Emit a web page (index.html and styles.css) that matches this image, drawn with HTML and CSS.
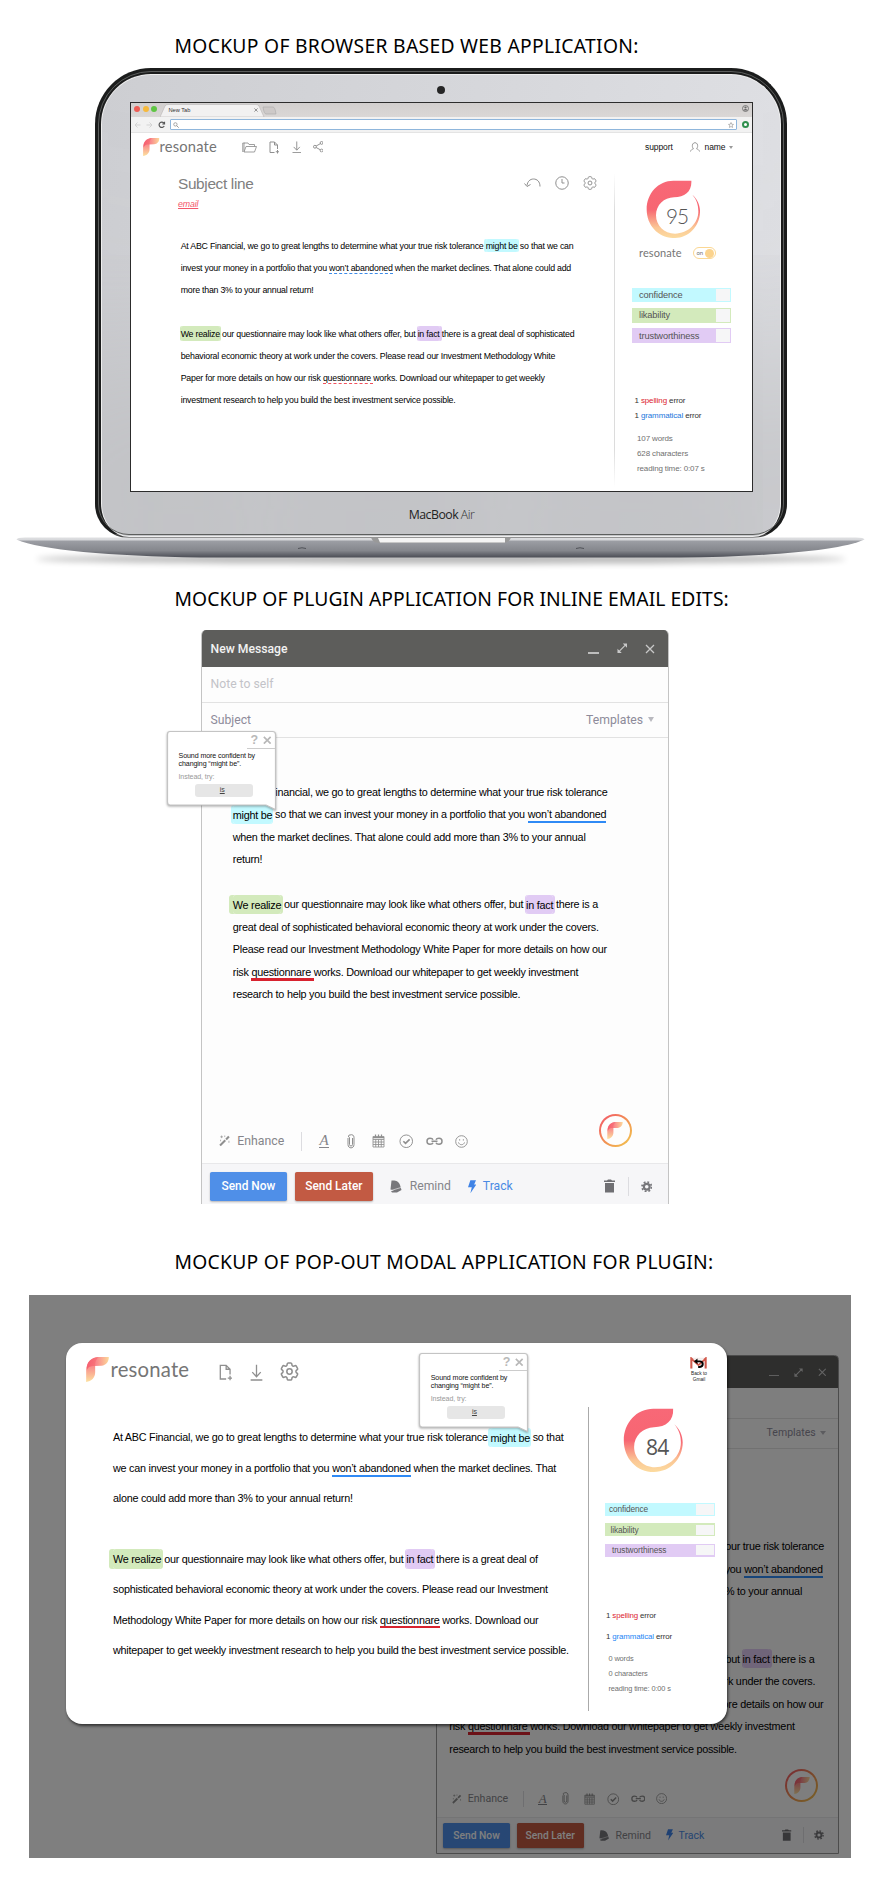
FILE: index.html
```html
<!DOCTYPE html>
<html lang="en">
<head>
<meta charset="utf-8">
<title>Resonate mockups</title>
<link rel="stylesheet" href="styles.css">
</head>
<body>
<svg class="defs" aria-hidden="true">
  <defs>
    <linearGradient id="ringFill" x1="0" y1="0" x2="0" y2="1"><stop offset="0" stop-color="#f86877"/><stop offset=".5" stop-color="#f76672"/><stop offset=".82" stop-color="#fbc795"/><stop offset="1" stop-color="#fcdb9f"/></linearGradient>
    <linearGradient id="leafH" x1="0" y1="0" x2="1" y2="0"><stop offset="0" stop-color="#f5566c"/><stop offset=".45" stop-color="#f87478"/><stop offset="1" stop-color="#fcd288"/></linearGradient>
    <linearGradient id="leafV" x1="0" y1="0" x2="0" y2="1"><stop offset="0" stop-color="#f5566c"/><stop offset=".45" stop-color="#f88279"/><stop offset="1" stop-color="#fcdc8e"/></linearGradient>
    <linearGradient id="metal" x1="0" y1="0" x2="0" y2="1"><stop offset="0" stop-color="#dfe0e2"/><stop offset=".1" stop-color="#d8d9dc"/><stop offset=".2" stop-color="#9b9da3"/><stop offset=".65" stop-color="#85878d"/><stop offset="1" stop-color="#4b4d55"/></linearGradient>
    <filter id="soft" x="-10%" y="-100%" width="120%" height="300%"><feGaussianBlur stdDeviation="3"/></filter>
  </defs>
  <symbol id="mark" viewBox="0 0 68 75">
    <path d="M0 75V40C1 16 14 2 38 0C29 6 27 16 27 26V46C27 62 16 74 0 75Z" fill="url(#leafV)" opacity=".85"/>
    <path d="M68 0H38C14 1 0 15 2 40C6 29 14 27 24 27L46 26C60 25 68 14 68 0Z" fill="url(#leafH)" opacity=".85"/>
  </symbol>
  <symbol id="ring" viewBox="618 478 164 176">
    <path fill="url(#ringFill)" d="M754 480H700C655 480 620 518 620 566C620 615 655 652 702 652C746 652 780 616 780 572C780 552 771 534 757 522C770 537 775 553 775 572C775 608 744 639 705 639C672 639 648 614 648 584C648 553 672 531 702 530C735 530 756 512 754 480Z"/>
  </symbol>
  <symbol id="i-folder" viewBox="0 0 30 22"><path d="M4 20V2h8l2 3h11v4M4 20L8 9h21l-4 11zM1.500 20V2H5"/></symbol>
  <symbol id="i-file" viewBox="0 0 20 26"><path d="M11 23H2V2h9l6 6v8M11 2v6h6M17 18v7M13.500 21.500h7"/></symbol>
  <symbol id="i-down" viewBox="0 0 20 26"><path d="M10 1v18M3.500 12.500l6.500 7 6.500-7M1 24.500h18"/></symbol>
  <symbol id="i-share" viewBox="0 0 22 24"><circle cx="4" cy="12" r="3"/><circle cx="18" cy="4" r="3"/><circle cx="18" cy="20" r="3"/><path d="M6.500 10.500l9-5M6.500 13.500l9 5"/></symbol>
  <symbol id="i-user" viewBox="0 0 22 22"><path d="M1 21c1-4 4-5 6.500-6M21 21c-1-4-4-5-6.500-6M7.500 15C5 12 4.500 8 6 4.500 8 .5 14 .5 16 4.500 17.500 8 17 12 14.500 15"/></symbol>
  <symbol id="i-undo" viewBox="0 0 34 20"><path d="M32 17C32 7 26 2 19 2 12 2 7 7 6 15M1 11l5 6 7-4"/></symbol>
  <symbol id="i-clock" viewBox="0 0 28 28"><circle cx="14" cy="14" r="12.500"/><path d="M14 6v8h5"/></symbol>
  <symbol id="i-gear" viewBox="2 2 20 20"><path d="M9.594 3.940c.09-.542.56-.94 1.110-.94h2.593c.55 0 1.020.398 1.110.94l.213 1.281c.063.374.313.686.645.87.074.04.147.083.22.127.325.196.72.257 1.075.124l1.217-.456a1.125 1.125 0 0 1 1.370.49l1.296 2.247a1.125 1.125 0 0 1-.26 1.431l-1.003.827c-.293.241-.438.613-.43.992a7.723 7.723 0 0 1 0 .255c-.008.378.137.75.43.991l1.004.827c.424.35.534.955.26 1.430l-1.298 2.247a1.125 1.125 0 0 1-1.369.491l-1.217-.456c-.355-.133-.75-.072-1.076.124a6.470 6.470 0 0 1-.22.128c-.331.183-.581.495-.644.869l-.213 1.281c-.09.543-.56.94-1.110.94h-2.594c-.55 0-1.019-.398-1.110-.94l-.213-1.281c-.062-.374-.312-.686-.644-.87a6.520 6.520 0 0 1-.22-.127c-.325-.196-.72-.257-1.076-.124l-1.217.456a1.125 1.125 0 0 1-1.369-.49l-1.297-2.247a1.125 1.125 0 0 1 .26-1.431l1.004-.827c.292-.24.437-.613.43-.991a6.932 6.932 0 0 1 0-.255c.007-.38-.138-.751-.43-.992l-1.004-.827a1.125 1.125 0 0 1-.26-1.430l1.297-2.247a1.125 1.125 0 0 1 1.370-.491l1.216.456c.356.133.751.072 1.076-.124.072-.044.146-.086.22-.128.332-.183.582-.495.644-.869z"/><circle cx="12" cy="12" r="2.800"/></symbol>
  <symbol id="i-wand" viewBox="0 0 22 22"><path d="M2 20L12 10" stroke-width="4"/><path d="M13.500 8.500L19 3" stroke-width="4"/><path d="M5 1v5M2.500 3.500h5M11 1v3M3 9v3M19 11v4" stroke-width="1.300"/></symbol>
  <symbol id="i-clip" viewBox="0 0 16 30"><path d="M11 8v13a3 3 0 0 1-6 0V7a2 2 0 0 1 1-5c5-2 8 1 8 5v14c0 9-12 9-12 0V8"/></symbol>
  <symbol id="i-cal" viewBox="0 0 26 28"><path d="M2 5h22v21H2zM2 11h22M2 16h22M2 21h22M7.500 11v15M13 11v15M18.500 11v15" stroke-width="1.700"/><path d="M7 1v6M13 1v6M19 1v6M2 7h22" stroke-width="2.500"/></symbol>
  <symbol id="i-check" viewBox="0 0 30 30"><circle cx="15" cy="15" r="13"/><path d="M9 15l4.500 4.500L22 11" stroke-width="3.500"/></symbol>
  <symbol id="i-link" viewBox="0 0 34 16"><path d="M14 5c-1-3-3-3-6-3-8 0-8 12 0 12 3 0 5 0 6-3M20 5c1-3 3-3 6-3 8 0 8 12 0 12-3 0-5 0-6-3M11 8h12" stroke-width="3"/></symbol>
  <symbol id="i-smile" viewBox="0 0 28 28"><circle cx="14" cy="14" r="12.500"/><path d="M7.500 16c2 6.500 11 6.500 13 0M10 9v3M18 9v3"/></symbol>
  <symbol id="i-bell" viewBox="0 0 24 26"><path d="M3 1c7-1 15 1 17 9l3 10-9 5H4L2 22 8 21 1 19z" fill="currentColor" stroke="none"/><path d="M2 21l20-6" stroke="#f6f6f8" stroke-width="1.200"/></symbol>
  <symbol id="i-bolt" viewBox="0 0 18 28"><path d="M5 0h12l-4 9h5L5 28l3-13H0z" fill="currentColor" stroke="none"/></symbol>
  <symbol id="i-trash" viewBox="0 0 22 28"><path d="M0 3h6l2-2h6l2 2h6v3H0zM2 8h18v19H2z" fill="currentColor" stroke="none"/></symbol>
  <symbol id="i-cog" viewBox="0 0 24 24"><circle cx="12" cy="12" r="6" stroke-width="4.500"/><circle cx="12" cy="12" r="10" stroke-width="3.500" stroke-dasharray="3.930 3.930"/></symbol>
  <symbol id="i-expand" viewBox="0 0 22 22"><path d="M4 18L18 4"/><path d="M12 1h9v9zM1 12v9h9z" fill="currentColor" stroke="none"/></symbol>
  <symbol id="i-x" viewBox="0 0 20 20"><path d="M2 2l16 16M18 2L2 18"/></symbol>
</svg>

<section class="mock mock-laptop">
  <h2>MOCKUP OF BROWSER BASED WEB APPLICATION:</h2>
  <div class="lid">
    <div class="camera-row"><span class="camera"></span></div>
    <div class="screen">
      <div class="tabs">
        <i class="dot red"></i><i class="dot amber"></i><i class="dot green"></i>
        <svg class="tab-shape" viewBox="0 0 120 14"><path d="M0 14L5 3Q6 1.500 8 1.500H96Q98 1.500 99 3L104 14Z" fill="#f2f1f1" stroke="#b9b6b6" stroke-width=".6"/><path d="M103 4h10q2 0 3 7h-10q-2 0-3-7z" fill="#cdc9c8" stroke="#aaa" stroke-width=".6"/></svg>
        <span class="tab-name">New Tab</span>
        <svg class="tab-x ico"><use href="#i-x"/></svg>
        <svg class="profile" viewBox="0 0 14 14"><circle cx="7" cy="7" r="6" fill="none" stroke="#666" stroke-width="1.600"/><circle cx="7" cy="5" r="2.200" fill="#666"/><path d="M3 11c1-4 7-4 8 0z" fill="#666"/></svg>
      </div>
      <div class="address">
        <svg class="nav" viewBox="0 0 32 8"><g fill="none" stroke="#d3d3d3"><path d="M6.500 4H1M3.500 1.500L1 4l2.500 2.500M12.500 4H18M15.500 1.500L18 4l-2.500 2.500"/><path stroke="#555" stroke-width="1.200" d="M30 2.200A2.700 2.700 0 1 0 30.200 5M30.500 .8v2.200h-2.200"/></g></svg>
        <div class="url">
          <svg viewBox="0 0 10 10"><circle cx="4" cy="4" r="2.800" fill="none" stroke="#888" stroke-width="1.200"/><path d="M6 6l3.500 3.500" stroke="#888" stroke-width="1.400"/></svg>
          <svg viewBox="0 0 12 12"><path d="M6 1l1.500 3.500 3.500.3-2.700 2.400.9 3.700L6 9l-3.200 1.900.9-3.700L1 4.800l3.500-.3z" fill="none" stroke="#777"/></svg>
        </div>
        <i class="ext"></i>
      </div>
      <div class="appbar">
        <svg class="mark"><use href="#mark"/></svg><span class="word">resonate</span>
        <svg class="ico a1"><use href="#i-folder"/></svg>
        <svg class="ico a2"><use href="#i-file"/></svg>
        <svg class="ico a3"><use href="#i-down"/></svg>
        <svg class="ico a4"><use href="#i-share"/></svg>
        <span class="support">support</span>
        <svg class="ico a5"><use href="#i-user"/></svg>
        <span class="name">name</span><i class="caret"></i>
      </div>
      <div class="workspace">
        <div class="editor">
          <div class="subject-row">
            <div><div class="subject">Subject line</div><div class="kind">email</div></div>
            <div class="tools">
              <svg class="ico b1"><use href="#i-undo"/></svg>
              <svg class="ico b2"><use href="#i-clock"/></svg>
              <svg class="ico b2 thin"><use href="#i-gear"/></svg>
            </div>
          </div>
          <p class="copy copy-sm">At ABC Financial, we go to great lengths to determine what your true risk tolerance <span class="hl cyan">might be</span> so that we can<br>invest your money in a portfolio that you <span class="u blue">won’t abandoned</span> when the market declines. That alone could add<br>more than 3% to your annual return!<br><br><span class="hl green">We realize</span> our questionnaire may look like what others offer, but <span class="hl purple">in fact</span> there is a great deal of sophisticated<br>behavioral economic theory at work under the covers. Please read our Investment Methodology White<br>Paper for more details on how our risk <span class="u red">questionnare </span>works. Download our whitepaper to get weekly<br>investment research to help you build the best investment service possible.</p>
        </div>
        <aside class="panel">
          <div class="score"><svg><use href="#ring"/></svg><b>95</b></div>
          <div class="switch-row"><span class="word tiny">resonate</span><span class="switch">on<i></i></span></div>
          <ul class="traits">
            <li class="cyan">confidence<i></i></li>
            <li class="green">likability<i></i></li>
            <li class="purple">trustworthiness<i></i></li>
          </ul>
          <div class="errors"><div>1 <em class="sp">spelling</em> error</div><div>1 <em class="gr">grammatical</em> error</div></div>
          <div class="stats"><div>107 words</div><div>628 characters</div><div>reading time: 0:07 s</div></div>
        </aside>
      </div>
    </div>
    <div class="brand"><b>MacBook</b> Air</div>
  </div>
  <svg class="base" viewBox="0 0 882 36">
    <ellipse cx="441" cy="22" rx="405" ry="5" fill="#000" opacity=".28" filter="url(#soft)"/>
    <path d="M16.500 2.500Q17 .5 25 .5H856Q864 .5 864.500 2.500C840 14 760 20 680 20.500H200C110 19 40 13 16.500 2.500Z" fill="url(#metal)"/>
    <path d="M371 .5H511Q509 6 503 6H379Q373 6 371 .5Z" fill="#999"/><path d="M378 1H505V5.500H380Z" fill="#f4f4f4"/>
    <path d="M298 11.500q4-1.500 8 0M576 11.500q4-1.500 8 0" stroke="#505258" fill="none"/>
  </svg>
</section>

<section class="mock mock-inline">
  <h2>MOCKUP OF PLUGIN APPLICATION FOR INLINE EMAIL EDITS:</h2>
  <div class="mail-holder">
    <div class="mail">
      <header><b>New Message</b><i class="min"></i><svg class="ico ex"><use href="#i-expand"/></svg><svg class="ico cl"><use href="#i-x"/></svg></header>
      <div class="field note"><span>Note to self</span></div>
      <div class="field"><span>Subject</span><span class="tpl">Templates<i></i></span></div>
      <p class="copy">At ABC Financial, we go to great lengths to determine what your true risk tolerance<br><span class="hl cyan">might be</span> so that we can invest your money in a portfolio that you <span class="u blue">won’t abandoned</span><br>when the market declines. That alone could add more than 3% to your annual<br>return!<br><br><span class="hl green">We realize</span> our questionnaire may look like what others offer, but <span class="hl purple">in fact</span> there is a<br>great deal of sophisticated behavioral economic theory at work under the covers.<br>Please read our Investment Methodology White Paper for more details on how our<br>risk <span class="u red">questionnare </span>works. Download our whitepaper to get weekly investment<br>research to help you build the best investment service possible.</p>
      <div class="format">
        <svg class="ico f1"><use href="#i-wand"/></svg><span class="enh">Enhance</span><i class="sep"></i>
        <span class="fa">A</span><svg class="ico f2"><use href="#i-clip"/></svg><svg class="ico f3"><use href="#i-cal"/></svg><svg class="ico f4"><use href="#i-check"/></svg><svg class="ico f5"><use href="#i-link"/></svg><svg class="ico f6"><use href="#i-smile"/></svg>
        <span class="badge"><svg><use href="#mark"/></svg></span>
      </div>
      <footer><span class="btn now">Send Now</span><span class="btn later">Send Later</span><svg class="ico g1"><use href="#i-bell"/></svg><span class="rem">Remind</span><svg class="ico g2"><use href="#i-bolt"/></svg><span class="trk">Track</span><svg class="ico g3"><use href="#i-trash"/></svg><i class="sep"></i><svg class="ico g4"><use href="#i-cog"/></svg></footer>
    </div>
    <div class="tip">
      <svg class="tip-shape" viewBox="0 0 112 84"><path d="M4 1.500H106.500Q109.500 1.500 109.500 4.500V79.500L100 75H4Q1.500 75 1.500 72V4.500Q1.500 1.500 4 1.500Z"/></svg>
      <div class="tip-top"><b>?</b><svg class="ico"><use href="#i-x"/></svg></div>
      <div class="tip-text">Sound more confident by<br>changing “might be”.</div>
      <div class="tip-try">Instead, try:</div>
      <div class="tip-btn">is</div>
    </div>
  </div>
</section>

<section class="mock mock-modal">
  <h2>MOCKUP OF POP-OUT MODAL APPLICATION FOR PLUGIN:</h2>
  <div class="stage">
    <div class="mail small">
      <header><b>New Message</b><i class="min"></i><svg class="ico ex"><use href="#i-expand"/></svg><svg class="ico cl"><use href="#i-x"/></svg></header>
      <div class="field note"><span>Note to self</span></div>
      <div class="field"><span>Subject</span><span class="tpl">Templates<i></i></span></div>
      <p class="copy">At ABC Financial, we go to great lengths to determine what your true risk tolerance<br><span class="hl cyan">might be</span> so that we can invest your money in a portfolio that you <span class="u blue">won’t abandoned</span><br>when the market declines. That alone could add more than 3% to your annual<br>return!<br><br><span class="hl green">We realize</span> our questionnaire may look like what others offer, but <span class="hl purple">in fact</span> there is a<br>great deal of sophisticated behavioral economic theory at work under the covers.<br>Please read our Investment Methodology White Paper for more details on how our<br>risk <span class="u red">questionnare </span>works. Download our whitepaper to get weekly investment<br>research to help you build the best investment service possible.</p>
      <div class="format">
        <svg class="ico f1"><use href="#i-wand"/></svg><span class="enh">Enhance</span><i class="sep"></i>
        <span class="fa">A</span><svg class="ico f2"><use href="#i-clip"/></svg><svg class="ico f3"><use href="#i-cal"/></svg><svg class="ico f4"><use href="#i-check"/></svg><svg class="ico f5"><use href="#i-link"/></svg><svg class="ico f6"><use href="#i-smile"/></svg>
        <span class="badge"><svg><use href="#mark"/></svg></span>
      </div>
      <footer><span class="btn now">Send Now</span><span class="btn later">Send Later</span><svg class="ico g1"><use href="#i-bell"/></svg><span class="rem">Remind</span><svg class="ico g2"><use href="#i-bolt"/></svg><span class="trk">Track</span><svg class="ico g3"><use href="#i-trash"/></svg><i class="sep"></i><svg class="ico g4"><use href="#i-cog"/></svg></footer>
    </div>
    <div class="shade"></div>
    <div class="modal">
      <div class="modal-bar">
        <svg class="mark"><use href="#mark"/></svg><span class="word">resonate</span>
        <svg class="ico m1"><use href="#i-file"/></svg><svg class="ico m2"><use href="#i-down"/></svg><svg class="ico m3"><use href="#i-gear"/></svg>
        <div class="back">
          <svg viewBox="0 0 52 36"><path d="M1 2v33h8V14L26 28 43 14v21h8V2" fill="#f3e9e7"/><path d="M4 35V4L26 24 48 4v31" fill="none" stroke="#d2594c" stroke-width="6"/><path d="M9 5h34L26 21z" fill="#f6f2f1"/><path d="M20 13h10c12 0 12 16 0 17h-5" fill="none" stroke="#000" stroke-width="6"/><path d="M12 13L23 4v18z" fill="#000"/></svg>
          <span>Back to<br>Gmail</span>
        </div>
      </div>
      <div class="modal-body">
        <p class="copy copy-lg">At ABC Financial, we go to great lengths to determine what your true risk tolerance <span class="hl cyan">might be</span> so that<br>we can invest your money in a portfolio that you <span class="u blue">won’t abandoned</span> when the market declines. That<br>alone could add more than 3% to your annual return!<br><br><span class="hl green">We realize</span> our questionnaire may look like what others offer, but <span class="hl purple">in fact</span> there is a great deal of<br>sophisticated behavioral economic theory at work under the covers. Please read our Investment<br>Methodology White Paper for more details on how our risk <span class="u red">questionnare</span> works. Download our<br>whitepaper to get weekly investment research to help you build the best investment service possible.</p>
        <aside class="panel">
          <div class="score"><svg><use href="#ring"/></svg><b>84</b></div>
          <ul class="traits">
            <li class="cyan">confidence<i></i></li>
            <li class="green">likability<i></i></li>
            <li class="purple">trustworthiness<i></i></li>
          </ul>
          <div class="errors"><div>1 <em class="sp">spelling</em> error</div><div>1 <em class="gr">grammatical</em> error</div></div>
          <div class="stats"><div>0 words</div><div>0 characters</div><div>reading time: 0:00 s</div></div>
        </aside>
      </div>
      <div class="tip">
        <svg class="tip-shape" viewBox="0 0 112 84"><path d="M4 1.500H106.500Q109.500 1.500 109.500 4.500V79.500L100 75H4Q1.500 75 1.500 72V4.500Q1.500 1.500 4 1.500Z"/></svg>
        <div class="tip-top"><b>?</b><svg class="ico"><use href="#i-x"/></svg></div>
        <div class="tip-text">Sound more confident by<br>changing “might be”.</div>
        <div class="tip-try">Instead, try:</div>
        <div class="tip-btn">is</div>
      </div>
    </div>
  </div>
</section>
</body>
</html>
```

FILE: styles.css
```css
* { box-sizing: border-box; }
html { background: #fff; }
body { margin: 0; width: 882px; height: 1894px; overflow: hidden; background: #fff; color: #111; font-family: "Liberation Sans", Arial, sans-serif; }
.defs { position: absolute; width: 0; height: 0; }
svg { display: block; flex: none; }
i, em { font-style: normal; }
.ico { fill: none; stroke: currentColor; stroke-width: 2; color: #8f8f8f; }

.mock { width: 882px; }
.mock-laptop { height: 587px; padding-top: 34px; }
.mock-inline { height: 663px; }
.mock-modal { height: 644px; }
h2 { margin: 0 0 0 174.500px; height: 24px; font: 400 19.300px/24px "Noto Sans", sans-serif; color: #000; white-space: nowrap; letter-spacing: .3px; }
.mock-inline h2 { letter-spacing: .06px; }
.mock-modal h2 { letter-spacing: .27px; }

/* laptop */
.lid { width: 692px; height: 470px; margin: 10px 0 0 95px; border: 6px solid #1b1c1c; border-bottom: 1px solid #444; border-radius: 56px 56px 34px 34px; background: linear-gradient(100deg, #cdced2 0%, #d6d7db 50%, #e0e1e5 100%); box-shadow: inset 0 0 0 1px #eee, inset 0 -300px 200px -120px #c0c1c4; outline: 1px solid #5c5e5d; outline-offset: -4px; }
.camera-row { height: 28px; padding-top: 12px; display: flex; justify-content: center; align-items: flex-start; }
.camera { width: 8px; height: 8px; border-radius: 50%; background: #262626; }
.screen { width: 623px; height: 390px; margin: 0 auto; border: 1px solid #2c2c2c; background: #fff; overflow: hidden; display: flex; flex-direction: column; }
.brand { height: 45px; padding-left: 1px; text-align: center; font: 300 12.300px/45px "Open Sans", sans-serif; letter-spacing: -.5px; color: #333; }
.brand b { font-weight: 400; color: #222; }
.base { width: 882px; height: 36px; margin-top: -1px; position: relative; }

.tabs { height: 14px; flex: none; display: flex; align-items: center; background: linear-gradient(#d2cfce, #dad7d6); }
.dot { width: 6px; height: 6px; border-radius: 50%; margin: -3px 0 0 2.700px; }
.dot.red { background: #ee5c54; margin-left: 3.500px; }
.dot.amber { background: #f6b93c; }
.dot.green { background: #5fc544; }
.tab-shape { width: 120px; height: 14px; margin-left: 3px; }
.tab-name { width: 86px; margin-left: -112px; font: 5.700px/14px "Liberation Sans", sans-serif; color: #333; }
.tab-x { width: 4px; height: 4px; color: #555; stroke-width: 3; }
.profile { width: 7px; height: 7px; margin: -4px 3px 0 auto; }
.address { height: 16px; flex: none; display: flex; align-items: center; background: #f2f2f2; border-bottom: 1px solid #e4e4e4; padding: 0 3px; }
.nav { width: 32px; height: 8px; }
.url { flex: 1; height: 11px; margin: 0 5px 0 4px; border: 1px solid #8fb6dc; border-radius: 1px; background: #fff; display: flex; justify-content: space-between; align-items: center; padding: 0 2px; }
.url svg { width: 6px; height: 6px; }
.ext { width: 7px; height: 7px; border-radius: 50%; border: 2.200px solid #2f8f4d; background: #fff; }

.appbar { height: 28px; flex: none; display: flex; align-items: center; padding: 0 19px 0 12.500px; font-size: 8.500px; letter-spacing: -.1px; color: #111; }
.appbar .mark { width: 16.500px; height: 18px; }
.word { font-family: Lato, sans-serif; color: #757575; font-weight: 400; letter-spacing: .2px; }
.appbar .word { width: 57.500px; font-size: 14.700px; line-height: 18px; margin-top: -2px; }
.a1 { width: 15px; height: 11px; margin-left: 25px; stroke-width: 1.700; }
.a2 { width: 10px; height: 13px; margin-left: 12px; }
.a3 { width: 9.500px; height: 12.300px; margin-left: 13px; }
.a4 { width: 10.500px; height: 11.500px; margin-left: 11px; }
.support { margin-left: auto; width: 28px; white-space: nowrap; letter-spacing: -.1px; }
.a5 { width: 10px; height: 10px; margin: 0 4.500px 0 17px; }
.name { width: 21.500px; }
.caret { margin-left: 2.500px; border: 2.200px solid transparent; border-top: 3.500px solid #999; border-bottom: 0; }

.workspace { flex: 1; display: flex; }
.editor { width: 483px; }
.subject-row { display: flex; justify-content: space-between; height: 73.500px; padding: 14px 17px 0 47.500px; }
.subject { font-size: 15.400px; line-height: 18px; color: #808080; letter-spacing: -.35px; }
.kind { margin-top: 5px; font-size: 8.800px; line-height: 12px; font-style: italic; color: #f4566a; text-decoration: underline; letter-spacing: -.15px; }
.tools { display: flex; gap: 14px; padding-top: 1px; }
.b1 { width: 17px; height: 10px; margin-top: 2px; }
.b2 { width: 14px; height: 14px; }
.b2.thin { stroke-width: 1.400; }

.copy { margin: 0; white-space: nowrap; font-size: 10.800px; letter-spacing: -.243px; line-height: 22.500px; color: #000; }
.copy-sm { padding-left: 50.200px; font-size: 8.800px; letter-spacing: -.228px; line-height: 22.050px; }
.hl { border-radius: 3px; padding: 3.500px 0; }
.hl.cyan { background: #c2f9ff; box-shadow: -2px 0 #c2f9ff, 1px 0 #c2f9ff; }
.hl.green { background: #d3eabc; box-shadow: -4px 0 #d3eabc, 2px 0 #d3eabc; }
.hl.purple { background: #e1cbf4; box-shadow: -1px 0 #e1cbf4, 2px 0 #e1cbf4; }
.u.blue { border-bottom: 2px solid #2f8af5; padding-bottom: 1px; }
.u.red { border-bottom: 3px solid #d8232f; }
.copy-sm .hl { padding: 1.500px 0; border-radius: 2px; }
.copy-sm .hl.green, .copy-sm .hl.purple { padding: 2.500px 0; }
.copy-sm .hl.green { box-shadow: -1px 0 #d3eabc, 1px 0 #d3eabc; }
.copy-sm .u.blue { border-bottom: 1px dashed #3d8be8; padding: 0; }
.copy-sm .u.red { border-bottom: 1px dashed #f0515d; padding: 0; }

.panel { position: relative; width: 137px; font-size: 8px; letter-spacing: -.13px; color: #333; white-space: nowrap; }
.workspace .panel { padding: 18.500px 0 0 18.500px; }
.workspace .panel::before { content: ""; position: absolute; left: 0; top: 12px; bottom: 4px; width: 1px; background: linear-gradient(#fff, #dcdcdc 12%, #dcdcdc 88%, #fff); }
.score { position: relative; width: 54.700px; height: 58.700px; margin-left: 13.500px; }
.score svg { width: 100%; height: 100%; }
.score b { position: absolute; left: 0; right: 0; top: 24px; padding-left: 8.500px; text-align: center; font: 300 20.800px/24px Lato, sans-serif; letter-spacing: -1px; color: #555; }
.switch-row { height: 14px; margin-top: 8px; padding-left: 7px; display: flex; align-items: center; }
.word.tiny { width: 53.500px; font-size: 11px; line-height: 14px; margin-top: -1px; letter-spacing: .1px; }
.switch { width: 23px; height: 12px; border: 1px solid #fbd793; border-radius: 6px; padding: 0 1px 0 3px; display: flex; align-items: center; justify-content: space-between; font: 6px/10px Lato, sans-serif; color: #777; }
.switch i { width: 9px; height: 9px; border-radius: 50%; background: #fbd38d; }
.traits { list-style: none; margin: 27.500px 0 0; padding: 0; display: flex; flex-direction: column; gap: 5.600px; }
.traits li { width: 99px; height: 14.800px; padding: 0 1px 0 7px; display: flex; align-items: center; justify-content: space-between; font-size: 9.300px; letter-spacing: -.15px; color: #555; }
.traits i { width: 14.500px; height: 12.800px; background: #f6f6f7; }
.traits .cyan { background: #c2f9ff; }
.traits .green { background: #d3eabc; }
.traits .purple { background: #e1cbf4; }
.errors { margin-top: 50.700px; padding-left: 2.500px; line-height: 14.700px; }
.sp { color: #dc2430; }
.gr { color: #2377dc; }
.stats { margin-top: 7.800px; padding-left: 5px; line-height: 15px; color: #707070; }

/* mail composer, scaled by its own font size */
.mail-holder { position: relative; width: 468px; margin: 19px 0 0 201px; }
.mail { font-size: 10px; width: 468px; height: 574px; display: flex; flex-direction: column; background: #fdfdfd; border: 1px solid #c4c4c4; border-top: 0; border-bottom: 0; border-radius: .5em .5em 0 0; overflow: hidden; color: #85858a; font-family: Roboto, sans-serif; }
.mail header { flex: none; height: 3.730em; background: #5d5d5b; display: flex; align-items: center; padding: 0 1.350em 0 .85em; color: #c8c8c8; }
.mail header b { font-size: 1.220em; font-weight: 500; color: #f2f2f2; margin-right: auto; }
.mail header .ico { color: #c8c8c8; }
.min { width: 1.150em; height: .2em; background: #bdbdbd; margin-top: .8em; }
.ex { width: 1.050em; height: 1.050em; margin-left: 1.750em; stroke-width: 2.500; }
.cl { width: 1em; height: 1em; margin-left: 1.750em; stroke-width: 2.500; }
.field { flex: none; height: 3.530em; border-bottom: 1px solid #e2e2e2; display: flex; align-items: center; justify-content: space-between; padding: 0 1.400em 0 .85em; color: #8d8b9a; }
.field span { font-size: 1.220em; line-height: 1; }
.field.note { color: #c3c3c8; }
.tpl { display: flex; align-items: center; }
.tpl i { margin-left: .4em; border: .3em solid transparent; border-top: .42em solid #b9b9bf; border-bottom: 0; }
.mail .copy { font-family: "Liberation Sans", Arial, sans-serif; padding: 43px 0 0 30.800px; }
.format { margin-top: auto; height: 5.700em; padding: 1.400em 3.650em 0 1.700em; flex: none; display: flex; align-items: center; }
.enh { font-size: 1.230em; width: 4.350em; margin-left: .55em; }
.sep { width: 1px; height: 1.900em; background: #dcdce0; }
.format .sep { margin-left: 1.050em; }
.fa { margin-left: 1.100em; font: italic 1.500em/.9 "Liberation Serif", serif; border-bottom: 1px solid #85858a; width: .7em; text-align: center; }
.f1 { width: 1.150em; height: 1.150em; }
.f2 { width: .8em; height: 1.500em; margin-left: 1.750em; }
.f3 { width: 1.300em; height: 1.400em; margin-left: 1.750em; }
.f4 { width: 1.450em; height: 1.450em; margin-left: 1.400em; }
.f5 { width: 1.700em; height: .85em; margin-left: 1.250em; }
.f6 { width: 1.300em; height: 1.300em; margin-left: 1.200em; }
.badge { flex: none; width: 33px; height: 33px; margin: 0 0 22px auto; border: 2px solid transparent; border-radius: 50%; background: linear-gradient(#fdfdfd, #fdfdfd) padding-box, linear-gradient(135deg, #f3506b, #f28a55 45%, #f2c94c) border-box; display: flex; align-items: center; justify-content: center; }
.badge svg { width: 16px; height: 17px; }
.mail footer { flex: none; height: 4.130em; padding: .5em 1.600em 0 .75em; background: #f6f6f8; border-top: 1px solid #e8e8ea; display: flex; align-items: center; }
.btn { height: 2.480em; width: 6.550em; padding-top: .05em; font-size: 1.190em; line-height: 2.450em; font-weight: 500; color: #fff; text-align: center; border-radius: .15em; box-shadow: 0 1px 2px #0004; white-space: nowrap; }
.now { background: #4f8fe8; }
.later { background: #c25a43; margin-left: .63em; }
.g1 { width: 1.200em; height: 1.300em; margin-left: 1.750em; color: #77777b; }
.rem { font-size: 1.220em; width: 3.380em; margin-left: .6em; }
.g2 { width: .85em; height: 1.350em; margin-left: 1.700em; color: #3f83e6; }
.trk { font-size: 1.220em; margin-left: .53em; color: #4a8ae4; }
.g3 { width: 1.100em; height: 1.400em; margin-left: auto; color: #6f6f73; }
footer .sep { margin: 0 1.200em 0 1.300em; }
.g4 { width: 1.150em; height: 1.150em; color: #77777b; }

.tip { position: absolute; z-index: 1; left: -35px; top: 99.500px; width: 112px; height: 84px; padding-left: 12.500px; font-size: 7.100px; line-height: 8.500px; letter-spacing: -.1px; color: #111; white-space: nowrap; }
.tip-shape { position: absolute; left: 0; top: 0; width: 112px; height: 84px; z-index: -1; fill: #fff; stroke: #c4c4c4; stroke-width: 1.200; filter: drop-shadow(0 1px 1px #0005); overflow: visible; }
.tip-top { width: 28px; height: 17.500px; margin: 2px 0 2.500px 68px; border-bottom: 1px solid #ccc; display: flex; align-items: center; gap: 5px; padding-left: 4px; color: #b9b9b9; font-size: 12.500px; }
.tip-top .ico { width: 8.500px; height: 8.500px; color: #b9b9b9; stroke-width: 4; }
.tip-try { margin-top: 4.500px; color: #999; }
.tip-btn { width: 57.500px; height: 13px; margin: 2px 0 0 16.500px; border-radius: 3px; background: #e6e6e6; text-align: center; line-height: 13px; text-decoration: underline; color: #444; padding-right: 3px; }

/* modal over mail */
.stage { position: relative; width: 822px; height: 563px; margin: 21px 0 0 29px; background: #fff; overflow: hidden; }
.mail.small { position: absolute; left: 406.500px; top: 60px; width: 403.500px; height: 499px; font-size: 8.620px; border: 1px solid #999; }
.mail.small .copy { padding: 86.500px 0 0 12.800px; }
.mail.small .format { padding-right: 20px; padding-left: 15.500px; }
.mail.small .badge { margin-bottom: 26px; }
.mail.small footer { padding-top: 0; padding-bottom: .1em; }
.shade { position: absolute; inset: 0; background: rgba(0, 0, 0, .5); }
.modal { position: absolute; left: 37.200px; top: 48.200px; width: 660.800px; height: 381px; background: #fff; border-radius: 16px; box-shadow: 1px 2px 3px #0009; }
.modal-bar { height: 63px; padding: 14px 18px 0 20.300px; display: flex; align-items: flex-start; }
.modal-bar .mark { width: 23px; height: 25px; }
.modal-bar .word { width: 80px; margin: 0 0 0 1px; font-size: 20.300px; line-height: 24px; }
.m1 { width: 13px; height: 17px; margin: 7px 0 0 29px; }
.m2 { width: 13px; height: 17px; margin: 7px 0 0 18px; }
.m3 { width: 19px; height: 19px; margin: 5px 0 0 17px; stroke-width: 1.600; }
.back { margin-left: auto; width: 20px; display: flex; flex-direction: column; align-items: center; text-align: center; font: 4.800px/6px "Liberation Sans", sans-serif; color: #222; white-space: nowrap; }
.back svg { width: 17px; height: 12px; margin-bottom: 2px; }
.modal-body { display: flex; }
.copy-lg { width: 475px; padding: 16.300px 0 0 46.800px; line-height: 30.380px; }
.copy-lg .hl { padding: 3.800px 0; }
.copy-lg .u.red { border-bottom-width: 2px; }
.modal .panel { margin-left: 46.800px; padding: 0 0 0 17px; font-size: 7.900px; }
.modal .panel::before { content: ""; position: absolute; left: 0; top: 1px; width: 1px; height: 304px; background: #aaa; }
.modal .score { width: 60.500px; height: 64.800px; margin: 2px 0 0 18.500px; }
.modal .score b { top: 27px; padding-left: 7px; font: 400 21px/24px "Open Sans", sans-serif; letter-spacing: -.7px; }
.modal .traits { margin-top: 30px; gap: 7.300px; }
.modal .traits li { width: 110.500px; height: 13px; padding-left: 4px; font-size: 8.300px; letter-spacing: -.1px; }
.modal .traits .green { padding-left: 5.500px; }
.modal .traits .purple { padding-left: 7px; }
.modal .traits i { width: 18.500px; height: 10.500px; }
.modal .errors { margin-top: 49.800px; padding-left: 1px; line-height: 20.200px; }
.modal .gr { color: #2385f5; }
.modal .stats { margin-top: 5.500px; padding-left: 3.500px; font-size: 7.400px; line-height: 14.700px; }
.modal .tip { left: 352px; top: 8.500px; }
```
